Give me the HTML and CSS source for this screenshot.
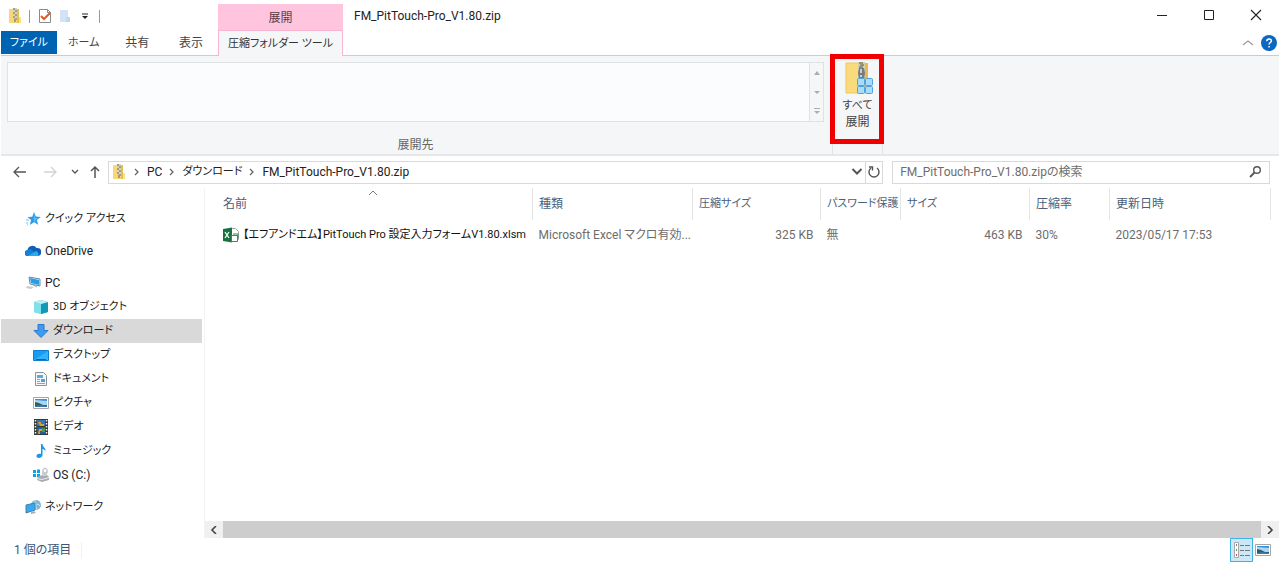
FILE: index.html
```html
<!DOCTYPE html>
<html lang="ja">
<head>
    <meta charset="UTF-8">
    <meta name="viewport" content="width=device-width, initial-scale=1.0">
    <title>FM_PitTouch-Pro_V1.80.zip</title>
    <link rel="stylesheet" href="styles.css">
</head>
<body>
    <svg class="sprite" aria-hidden="true">
        <symbol id="zip" viewBox="0 0 16 16">
            <path d="M2 1h8v14H2z" fill="#f8d775"/>
            <path d="M10 1h2v8h2v6h-4z" fill="#e9bd4c"/>
            <path d="M12 9h2v6h-2z" fill="#fbe08a"/>
            <path d="M6 0h4v12H6z" fill="#d9d2b4"/>
            <path d="M6 1h2M8 3h2M6 5h2M8 7h2M6 9h2M8 11h2" stroke="#6b6b66"/>
            <path d="M7 11h2v3H7z" fill="#a39b80"/>
        </symbol>
        <symbol id="chev" viewBox="0 0 8 8">
            <path d="M2 1l3 3-3 3" fill="none" stroke="#666" stroke-width="1.3"/>
        </symbol>
        <symbol id="down" viewBox="0 0 8 8">
            <path d="M1 2l3 3 3-3" fill="none" stroke="#555" stroke-width="1.3"/>
        </symbol>
        <symbol id="photo" viewBox="0 0 16 16">
            <path d="M.5 2.500h15v11H.5z" fill="#fff" stroke="#a6a6a6"/>
            <path d="M2 4h12v8H2z" fill="#a9d5f5"/>
            <path d="M2 4h12v2L2 5z" fill="#3d8fd6"/>
            <path d="M2 7l4 1 4 2h4v2H2z" fill="#2f5f58"/>
            <path d="M2 11l6-1 6 1v1H2z" fill="#3c76ae"/>
        </symbol>
    </svg>

    <div class="window">
        <!-- タイトルバーとタブ -->
        <header class="header">
            <div class="header-left">
                <div class="quick-bar">
                    <svg class="icon"><use href="#zip"/></svg>
                    <span class="bar"></span>
                    <button class="quick-button" aria-label="プロパティ">
                        <svg class="icon" viewBox="0 0 16 16"><path d="M2.500 1.500h8l3 3v10h-11z" fill="#fff" stroke="#8c8c8c"/><path d="M10.500 1.500v3h3" fill="none" stroke="#8c8c8c"/><path d="M4 8l3 3 6-6" fill="none" stroke="#e8571f" stroke-width="2"/></svg>
                    </button>
                    <button class="quick-button" aria-label="新しいフォルダー">
                        <svg class="icon" viewBox="0 0 16 16"><path d="M3 2h8v8h2v4H3z" fill="#d3e2f5"/><path d="M9 9h4v5H9z" fill="#c2d6ef"/></svg>
                    </button>
                    <button class="quick-button" aria-label="クイック アクセス ツール バーのカスタマイズ">
                        <svg class="icon" viewBox="0 0 16 16"><path d="M5 6h6" stroke="#222"/><path d="M5 8h6l-3 3z" fill="#222"/></svg>
                    </button>
                    <span class="bar"></span>
                </div>
                <nav class="tabs">
                    <button class="tab file kana">ファイル</button>
                    <button class="tab kana">ホーム</button>
                    <button class="tab">共有</button>
                    <button class="tab">表示</button>
                </nav>
            </div>
            <div class="tool-tab">
                <div class="tool-title">展開</div>
                <button class="tab active kana">圧縮フォルダー ツール</button>
            </div>
            <div class="header-right">
                <div class="title-bar">
                    <h1 class="title">FM_PitTouch-Pro_V1.80.zip</h1>
                    <button class="window-button" aria-label="最小化"><svg class="icon" viewBox="0 0 16 16"><path d="M3 8.500h10" stroke="#222"/></svg></button>
                    <button class="window-button" aria-label="最大化"><svg class="icon" viewBox="0 0 16 16"><path d="M3.500 3.500h9v9h-9z" fill="none" stroke="#222"/></svg></button>
                    <button class="window-button" aria-label="閉じる"><svg class="icon" viewBox="0 0 16 16"><path d="M3 3l10 10M13 3L3 13" stroke="#222" stroke-width="1.1"/></svg></button>
                </div>
                <div class="help-bar">
                    <button class="quick-button" aria-label="リボンの最小化"><svg class="icon" viewBox="0 0 16 16"><path d="M3 10l5-4 5 4" fill="none" stroke="#999" stroke-width="1.2"/></svg></button>
                    <button class="quick-button" aria-label="ヘルプ"><svg class="icon" viewBox="0 0 16 16"><circle cx="8" cy="8" r="8" fill="#0b67c0"/><path d="M5.800 6.200c0-3 4.600-3 4.600-.4 0 1.700-2.300 1.800-2.300 3.700M8.100 11v1.600" fill="none" stroke="#fff" stroke-width="1.500"/></svg></button>
                </div>
            </div>
        </header>

        <!-- リボン -->
        <section class="ribbon">
            <div class="ribbon-group">
                <div class="gallery">
                    <div class="gallery-list"></div>
                    <div class="gallery-scroll">
                        <button class="gallery-button" aria-label="上へ"><svg class="arrow" viewBox="0 0 8 8"><path d="M1 6h6L4 2z" fill="#a9adb5"/></svg></button>
                        <button class="gallery-button" aria-label="下へ"><svg class="arrow" viewBox="0 0 8 8"><path d="M1 3h6L4 6z" fill="#a9adb5"/></svg></button>
                        <button class="gallery-button" aria-label="その他"><svg class="arrow" viewBox="0 0 8 8"><path d="M1 1.500h6" stroke="#a9adb5"/><path d="M1 4h6L4 7z" fill="#a9adb5"/></svg></button>
                    </div>
                </div>
                <div class="group-name">展開先</div>
            </div>
            <div class="ribbon-group extract-group">
                <button class="extract">
                    <svg class="extract-icon" viewBox="0 0 32 32">
                        <path d="M4 1h17v30H4z" fill="#f9db7b"/>
                        <path d="M4 1h17v30H4z" fill="none" stroke="#efc75c"/>
                        <path d="M21 1h5v30h-5z" fill="#e6bb50"/>
                        <path d="M16 0h7v15h-7z" fill="#d8cfad"/>
                        <path d="M17 1h4M18 3h4M17 5h4M18 7h4" stroke="#55544e"/>
                        <path d="M17 6h5l1 5-1 6h-5l-1-6z" fill="#777c80"/>
                        <path d="M19 7v4M19 13v2" stroke="#e7ebee" stroke-width="1.500"/>
                        <g fill="#a9dcfb" stroke="#4fa3dc"><rect x="15.500" y="16.500" width="7" height="7" rx="1"/><rect x="23.500" y="16.500" width="7" height="7" rx="1"/><rect x="15.500" y="24.500" width="7" height="7" rx="1"/><rect x="23.500" y="24.500" width="7" height="7" rx="1"/></g>
                    </svg>
                    <span class="kana">すべて</span><br>展開
                </button>
            </div>
        </section>

        <!-- アドレスバー -->
        <div class="address-row">
            <div class="nav-buttons">
                <button class="nav-button" aria-label="戻る"><svg class="icon" viewBox="0 0 16 16"><path d="M14 8H2M7 3L2 8l5 5" fill="none" stroke="#555" stroke-width="1.300"/></svg></button>
                <button class="nav-button" aria-label="進む"><svg class="icon" viewBox="0 0 16 16"><path d="M2 8h12M9 3l5 5-5 5" fill="none" stroke="#d2d2d2" stroke-width="1.300"/></svg></button>
                <button class="nav-button small" aria-label="最近表示した場所"><svg class="arrow"><use href="#down"/></svg></button>
                <button class="nav-button small" aria-label="上へ"><svg class="icon" viewBox="0 0 16 16"><path d="M8 14V3M4 7l4-4 4 4" fill="none" stroke="#555" stroke-width="1.500"/></svg></button>
            </div>
            <div class="address">
                <svg class="icon"><use href="#zip"/></svg>
                <svg class="crumb-arrow"><use href="#chev"/></svg>
                <a class="crumb" href="#">PC</a>
                <svg class="crumb-arrow"><use href="#chev"/></svg>
                <a class="crumb kana" href="#">ダウンロード</a>
                <svg class="crumb-arrow"><use href="#chev"/></svg>
                <a class="crumb" href="#">FM_PitTouch-Pro_V1.80.zip</a>
                <button class="address-button history" aria-label="以前の場所"><svg class="history-icon"><use href="#down"/></svg></button>
                <button class="address-button refresh" aria-label="最新の情報に更新"><svg class="icon" viewBox="0 0 16 16"><path d="M5 4a5 5 0 1 0 6 0" fill="none" stroke="#555" stroke-width="1.400"/><path d="M3 3h3.500v3.500" fill="none" stroke="#555" stroke-width="1.400"/></svg></button>
            </div>
            <form class="search">
                <input class="search-input" type="search" aria-label="検索" placeholder="FM_PitTouch-Pro_V1.80.zipの検索">
                <button class="search-button" type="button" aria-label="検索"><svg class="icon" viewBox="0 0 16 16"><circle cx="10" cy="6" r="3.300" fill="none" stroke="#555" stroke-width="1.400"/><path d="M7.500 8.500L3 13" stroke="#555" stroke-width="1.800"/></svg></button>
            </form>
        </div>

        <main class="content">
            <!-- ナビゲーション ウィンドウ -->
            <nav class="sidebar">
                <a class="side-item kana" href="#"><svg class="icon" viewBox="0 0 16 16"><path d="M9 1l1.800 4.600 5 .3-3.900 3.100 1.300 4.800L9 11.200 4.800 14l1.300-4.900L2.500 6l4.800-.3z" fill="#2d9be8"/><path d="M9 3l1 4 3 0-3 2 1 3-2-2z" fill="#5cc0fa"/><path d="M1 9h3M1 12h2M2 14h1" stroke="#77bdf0"/></svg>クイック アクセス</a>
                <a class="side-item" href="#"><svg class="icon" viewBox="0 0 16 16"><path d="M3 13a3 3 0 0 1-.5-6A5 5 0 0 1 11.500 5a4 4 0 0 1 1.500 8z" fill="#0f5fb8"/><path d="M2 13a3 3 0 0 1-1-5l4-2 9 6-1 1z" fill="#1580d8"/><path d="M3 13l8-5a3.500 3.500 0 0 1 2 5z" fill="#2ea8ef"/></svg>OneDrive</a>
                <a class="side-item" href="#"><svg class="icon" viewBox="0 0 16 16"><path d="M4 2l11 2v7L5 9z" fill="#dceaf3" stroke="#688da5"/><path d="M5 3l9 2v5L6 8z" fill="#249ee9"/><path d="M2 11l7 1-3 2-5-1z" fill="#c8cdd1"/><path d="M8 10l4 2" stroke="#9da5aa"/></svg>PC</a>
                <a class="side-item sub kana" href="#"><svg class="icon" viewBox="0 0 16 16"><path d="M1 3l7-2 7 2v10l-7 2-7-2z" fill="#3fc1d4"/><path d="M1 3l7 2v10l-7-2z" fill="#7ee1ec"/><path d="M8 5l7-2v10l-7 2z" fill="#1597b6"/><path d="M1 3l7-2 7 2-7 2z" fill="#bcf0f4"/></svg>3D オブジェクト</a>
                <a class="side-item sub selected kana" href="#"><svg class="icon" viewBox="0 0 16 16"><path d="M5 1.500h6v6h4L8 14.500 1 7.500h4z" fill="#3d9cf0" stroke="#2879cd"/></svg>ダウンロード</a>
                <a class="side-item sub kana" href="#"><svg class="icon" viewBox="0 0 16 16"><path d="M.5 3.500h15v10H.5z" fill="#169df2" stroke="#0f7fd0"/><path d="M1 13L15 4v9z" fill="#37b2fa"/><path d="M3 12.500h10" stroke="#0a64ae"/></svg>デスクトップ</a>
                <a class="side-item sub kana" href="#"><svg class="icon" viewBox="0 0 16 16"><path d="M2.500 1.500h8l3 3v10h-11z" fill="#f5f8fa" stroke="#8c9296"/><path d="M4 4h6v3H4z" fill="#5da9d9"/><path d="M4 8.500h3M4 10.500h3M4 12.500h8" stroke="#91a5b2"/><path d="M8 8h4v3H8z" fill="#4ea3df"/></svg>ドキュメント</a>
                <a class="side-item sub kana" href="#"><svg class="icon"><use href="#photo"/></svg>ピクチャ</a>
                <a class="side-item sub kana" href="#"><svg class="icon" viewBox="0 0 16 16"><path d="M1 0h14v16H1z" fill="#37383a"/><path d="M4 1h8v6H4z" fill="#3874b8"/><path d="M4 8h8v7H4z" fill="#245b9d"/><path d="M5 3h3v2h3v2H7zM6 10h4v2H7v3H5z" fill="#d2a23b"/><path d="M9 9h3v4H9z" fill="#4b9256"/><path d="M2.500 1v14M13.500 1v14" stroke="#eee" stroke-width="1.500" stroke-dasharray="1.500 1.500"/></svg>ビデオ</a>
                <a class="side-item sub kana" href="#"><svg class="icon" viewBox="0 0 16 16"><path d="M8 1h1.500c0 3 3.500 3.500 3 7.500-.7-1.700-1.500-2.300-3-2.500v6c0 3.500-6 4-6 1.300C3.500 11 6 10.500 8 11z" fill="#1697ef"/></svg>ミュージック</a>
                <a class="side-item sub" href="#"><svg class="icon" viewBox="0 0 16 16"><path d="M0 3h3v3H0zM4 2.500h3V6H4zM0 7h3v3H0zM4 7h3v3H4z" fill="#08a4e8"/><path d="M6 9l7-2 3 3v3l-7 2-5-2v-2z" fill="#a7adb1"/><path d="M4 11l5 1 7-2v1l-7 2-5-1z" fill="#e8ebed"/><path d="M10 6V3.500c0-3 4-3 4 0V6" fill="none" stroke="#9fa4a7"/><path d="M9 5h5v4H9z" fill="#c8cccf"/></svg>OS (C:)</a>
                <a class="side-item kana" href="#"><svg class="icon" viewBox="0 0 16 16"><circle cx="11" cy="6" r="5" fill="#7fb4d2"/><path d="M7 4c3 2 6 0 8 3M10 1c-1 4 2 6 1 10" fill="none" stroke="#d6edf6"/><path d="M1 6l9-2v7l-9 3z" fill="#35aaf0" stroke="#4482a7"/><path d="M6 13l3-1 2 2-5 1z" fill="#a4afb6"/></svg>ネットワーク</a>
            </nav>

            <!-- ファイル一覧 -->
            <section class="files">
                <table class="file-table">
                    <colgroup>
                        <col>
                        <col class="col-type">
                        <col class="col-packed">
                        <col class="col-ratio">
                        <col class="col-size">
                        <col class="col-ratio">
                        <col class="col-date">
                    </colgroup>
                    <thead>
                        <tr>
                            <th class="name-head">名前<svg class="sort" viewBox="0 0 8 8"><path d="M0 6l4-4 4 4" fill="none" stroke="#777"/></svg></th>
                            <th>種類</th>
                            <th class="kana">圧縮サイズ</th>
                            <th class="kana">パスワード保護</th>
                            <th class="kana">サイズ</th>
                            <th>圧縮率</th>
                            <th>更新日時</th>
                        </tr>
                    </thead>
                    <tbody>
                        <tr>
                            <td><a class="file-name kana" href="#"><svg class="icon" viewBox="0 0 16 16"><path d="M7.500 1.500h5l3 3v8h-8z" fill="#fff" stroke="#9bad9f"/><path d="M0 2l9-1.500v15L0 14z" fill="#18723f"/><path d="M2 5l4 6M6 5l-4 6" stroke="#fff" stroke-width="1.300"/><path d="M8.500 8.500h6v6h-6z" fill="#fff" stroke="#398859"/><path d="M10 7h5v4" fill="none" stroke="#398859"/></svg>【エフアンドエム】PitTouch Pro 設定入力フォームV1.80.xlsm</a></td>
                            <td>Microsoft Excel マクロ有効...</td>
                            <td class="number">325 KB</td>
                            <td>無</td>
                            <td class="number">463 KB</td>
                            <td>30%</td>
                            <td>2023/05/17 17:53</td>
                        </tr>
                    </tbody>
                </table>
                <div class="scrollbar">
                    <button class="scroll-button" aria-label="左へスクロール"><svg class="arrow" viewBox="0 0 8 8"><path d="M6 0L2 4l4 4" fill="none" stroke="#444" stroke-width="1.600"/></svg></button>
                    <div class="scroll-thumb"></div>
                    <button class="scroll-button" aria-label="右へスクロール"><svg class="arrow" viewBox="0 0 8 8"><path d="M2 0l4 4-4 4" fill="none" stroke="#444" stroke-width="1.600"/></svg></button>
                </div>
            </section>
        </main>

        <!-- ステータスバー -->
        <footer class="status">
            <span class="count">1 個の項目</span>
            <button class="view-button on" aria-label="詳細"><svg class="icon" viewBox="0 0 16 16"><path d="M.5.500h4v15h-4z" fill="#fff" stroke="#aaa"/><path d="M2 3h1M2 8h1" stroke="#6d8b74" stroke-width="2"/><path d="M2 13h1" stroke="#d54e3d" stroke-width="2"/><path d="M6 3.500h4M11 3.500h5M6 8.500h4M11 8.500h5M6 13.500h4M11 13.500h5" stroke="#777"/></svg></button>
            <button class="view-button" aria-label="大アイコン"><svg class="icon"><use href="#photo"/></svg></button>
        </footer>
    </div>
</body>
</html>
```
FILE: styles.css
```css
*, *::after {
    box-sizing: border-box;
}
body {
    margin: 0;
    background-color: #fff;
    color: #222;
    font-family: Roboto, "Noto Sans CJK JP", sans-serif;
    font-size: 12px;
    line-height: 16px;
    font-feature-settings: "palt";
}
button, input {
    font: inherit;
    color: inherit;
    font-feature-settings: inherit;
    border: none;
    background: none;
    padding: 0;
    margin: 0;
}
a {
    color: inherit;
    text-decoration: none;
}
svg {
    display: block;
    flex: none;
}
/* カナ中心の文字 */
.kana {
    font-size: 11px;
}
.sprite {
    position: absolute;
    width: 0;
    height: 0;
}
.icon {
    width: 16px;
    height: 16px;
}
.arrow {
    width: 8px;
    height: 8px;
}
.window {
    display: flex;
    flex-direction: column;
    min-height: 100vh;
    padding: 0 1px;
}
/* タイトルバーとタブ */
.header {
    display: grid;
    grid-template-columns: 217px 125px 1fr;
}
.header-left, .header-right {
    border-bottom: 1px solid #fbb4d0;
}
.quick-bar {
    display: flex;
    align-items: center;
    height: 30px;
    padding: 2px 0 0 6px;
    gap: 4px;
}
.quick-button {
    display: flex;
}
.bar {
    width: 1px;
    height: 13px;
    margin: 0 3px 0 2px;
    background-color: #999;
}
.tabs {
    display: flex;
    height: 25px;
}
.tab {
    width: 54px;
    height: 25px;
    color: #444;
}
.tab.file {
    width: 56px;
    height: 23px;
    margin-top: 1px;
    background-color: #0063b1;
    color: #fff;
}
.tool-tab {
    padding-top: 4px;
}
.tool-title {
    height: 26px;
    line-height: 28px;
    text-align: center;
    background-color: #ffc5de;
    color: #5b3c49;
}
.tab.active {
    width: 100%;
    height: 26px;
    background-color: #f5f6f7;
    border: 1px solid #fbb4d0;
    border-bottom: none;
    white-space: nowrap;
    color: #333;
}
.title-bar {
    display: flex;
    height: 30px;
}
.title {
    flex: 1;
    margin: 0;
    padding-left: 11px;
    font-size: 12px;
    font-weight: normal;
    line-height: 32px;
}
.window-button {
    display: flex;
    align-items: center;
    justify-content: center;
    width: 47px;
}
.help-bar {
    display: flex;
    align-items: center;
    justify-content: flex-end;
    gap: 5px;
    height: 25px;
    padding-right: 2px;
}
/* リボン */
.ribbon {
    display: flex;
    height: 100px;
    background-color: #f5f6f7;
    border-bottom: 2px solid #e6e7e8;
}
.ribbon-group {
    display: flex;
    flex-direction: column;
    justify-content: space-between;
    flex: 0 1 832px;
    padding: 6px 8px 1px 6px;
    border-right: 1px solid #e2e3e4;
}
.gallery {
    display: flex;
    height: 60px;
    border: 1px solid #dfe1e3;
}
.gallery-list {
    flex: 1;
    background-color: #fbfcfe;
}
.gallery-scroll {
    display: flex;
    flex-direction: column;
    width: 14px;
    border-left: 1px solid #dfe1e3;
}
.gallery-button {
    display: flex;
    align-items: center;
    justify-content: center;
    flex: 1;
}
.group-name {
    text-align: center;
    color: #666;
}
.extract-group {
    position: relative;
    flex: 0 0 50px;
    padding: 6px 0;
}
/* 強調の赤枠 */
.extract-group::after {
    content: "";
    position: absolute;
    top: -2px;
    left: -3px;
    right: -2px;
    height: 90px;
    border: 5px solid #f00000;
}
.extract {
    color: #444;
}
.extract-icon {
    width: 32px;
    height: 32px;
    margin: 0 auto 3px;
}
/* アドレスバー */
.address-row {
    display: flex;
    align-items: center;
    height: 32px;
    padding-right: 9px;
}
.nav-buttons {
    display: flex;
    width: 107px;
    padding-left: 4px;
}
.nav-button {
    display: flex;
    align-items: center;
    justify-content: center;
    width: 30px;
    height: 22px;
}
.nav-button.small {
    width: 20px;
}
.address {
    display: flex;
    align-items: center;
    flex: 68 1 0;
    height: 23px;
    padding-left: 2px;
    border: 1px solid #d9d9d9;
}
.crumb-arrow {
    width: 8px;
    height: 8px;
    margin: 0 6px;
}
.address-button {
    display: flex;
    align-items: center;
    justify-content: center;
    width: 17px;
    height: 21px;
}
.history {
    margin-left: auto;
}
.history-icon {
    width: 12px;
    height: 12px;
}
.refresh {
    border-left: 1px solid #d9d9d9;
}
.search {
    display: flex;
    align-items: center;
    flex: 32 1 0;
    height: 23px;
    margin-left: 9px;
    padding: 0 6px 0 7px;
    border: 1px solid #d9d9d9;
}
.search-input {
    flex: 1;
    min-width: 0;
    outline: none;
}
.search-input::placeholder {
    color: #6d6d6d;
}
/* ナビゲーション */
.content {
    display: flex;
    flex: 1;
}
.sidebar {
    width: 204px;
    padding: 19px 2px 0 0;
    border-right: 1px solid #f3f3f3;
}
.side-item {
    display: flex;
    align-items: center;
    gap: 4px;
    height: 24px;
    padding-left: 24px;
}
.side-item:not(.sub) + .side-item:not(.sub), .sub + .side-item:not(.sub) {
    margin-top: 8px;
}
.side-item.sub {
    padding-left: 32px;
}
.side-item.selected {
    background-color: #d9d9d9;
}
/* ファイル一覧 */
.files {
    display: flex;
    flex-direction: column;
    justify-content: space-between;
    flex: 1;
    min-width: 0;
}
.file-table {
    table-layout: fixed;
    width: calc(100% - 8px);
    border-collapse: collapse;
    color: #6d6d6d;
}
.file-table th, .file-table td {
    padding: 0 7px 0 6px;
    text-align: left;
    font-weight: normal;
    white-space: nowrap;
}
.file-table th {
    height: 32px;
    border-right: 1px solid #e5e5e5;
    color: #4c607a;
}
.file-table td {
    height: 30px;
}
.file-table th:first-child, .file-table td:first-child {
    padding-left: 18px;
}
.file-table td.number {
    text-align: right;
}
.col-type {
    width: 160px;
}
.col-packed {
    width: 128px;
}
.col-ratio {
    width: 80px;
}
.col-size {
    width: 129px;
}
.col-date {
    width: 161px;
}
.name-head {
    position: relative;
}
.sort {
    position: absolute;
    top: 1px;
    left: 50%;
    width: 8px;
    height: 8px;
}
.file-name {
    display: flex;
    align-items: center;
    gap: 4px;
    color: #111;
}
.scrollbar {
    display: flex;
    height: 17px;
    background-color: #f0f0f0;
}
.scroll-button {
    display: flex;
    align-items: center;
    justify-content: center;
    width: 18px;
}
.scroll-thumb {
    flex: 1;
    background-color: #cdcdcd;
}
/* ステータスバー */
.status {
    display: flex;
    align-items: center;
    height: 24px;
    padding-right: 6px;
    color: #3b5578;
}
.count {
    margin-right: auto;
    padding: 0 10px 0 13px;
    border-right: 1px solid #f0f0f0;
}
.view-button {
    display: flex;
    align-items: center;
    justify-content: center;
    width: 20px;
    height: 24px;
}
.view-button.on {
    width: 23px;
    background-color: #cce8f6;
    border: 1px solid #3fb2ea;
}
```
